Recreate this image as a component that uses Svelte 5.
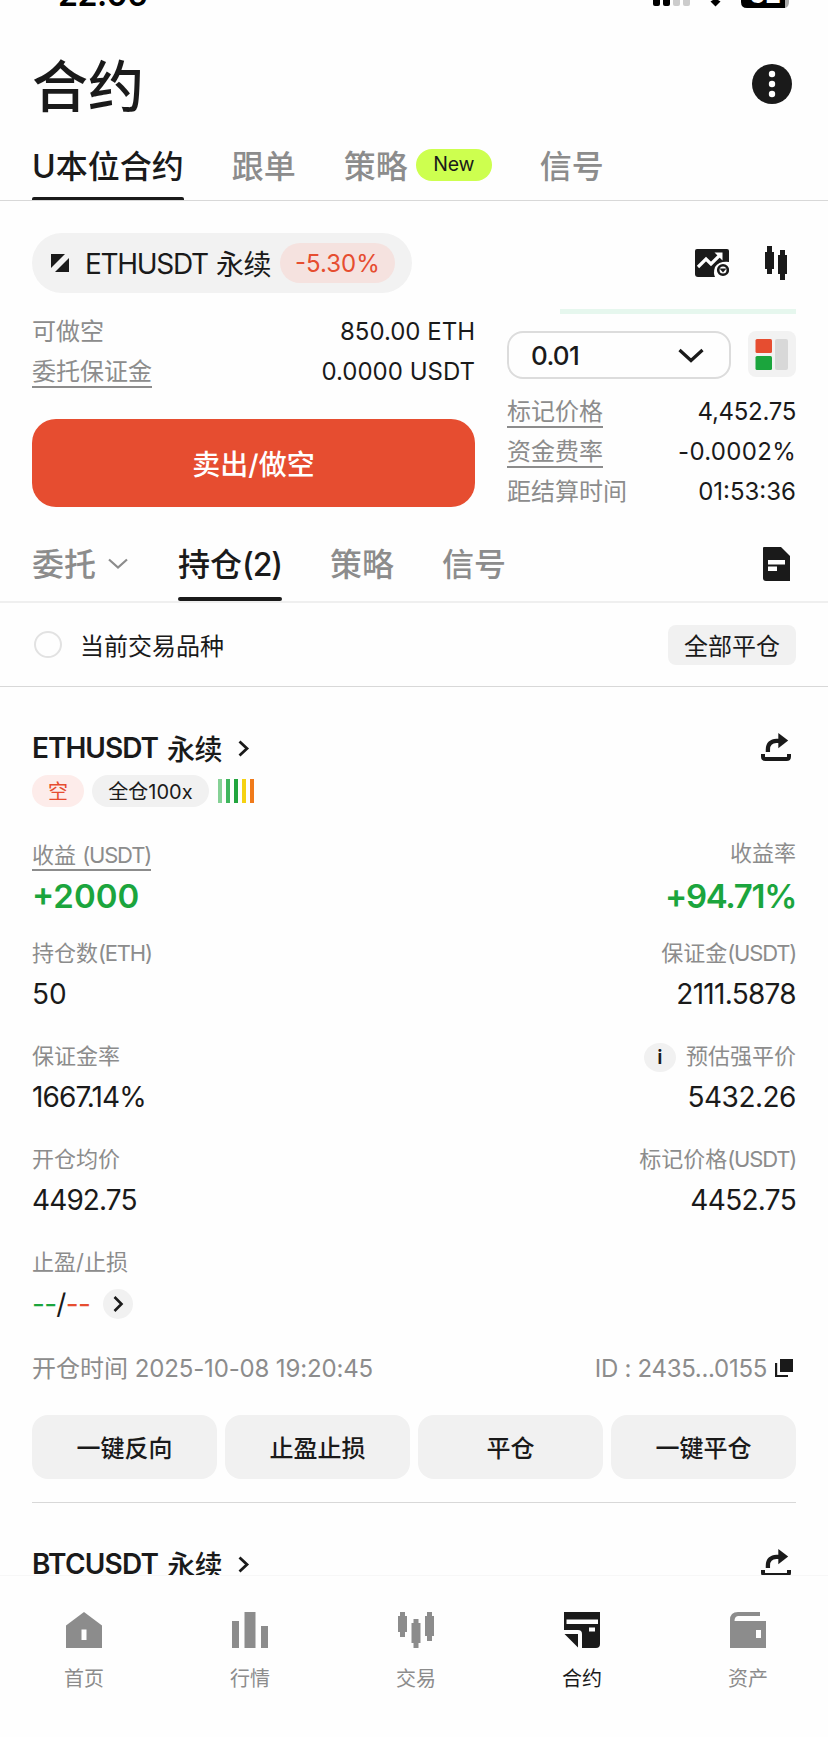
<script>
  // label text, latin unit, value, tracking class: left column then right column
  const fields = [
    { l: ['持仓数', '(ETH)', '50', ''], r: ['保证金', '(USDT)', '2111.5878', 't7'] },
    { l: ['保证金率', '', '1667.14%', 't8'], r: ['预估强平价', '', '5432.26', 't5'], info: true },
    { l: ['开仓均价', '', '4492.75', 't8'], r: ['标记价格', '(USDT)', '4452.75', 't7'] }
  ];
  const bars = ['#86d196', '#3fb65d', '#22a53e', '#f5d211', '#f07a1a'];
  const actions = ['一键反向', '止盈止损', '平仓', '一键平仓'];
  const nav = ['首页', '行情', '交易', '合约', '资产'];
</script>

{#snippet share()}
  <svg class="share" width="30" height="28" viewBox="0 0 30 28" fill="none" stroke="#1a1a1a">
    <path d="M6.900 19v-2.500c0-5.500 3.500-8.700 8.500-8.700h3" stroke-width="4.300" />
    <path d="M17.300 0L27.200 7.600l-9.900 7.600z" fill="#1a1a1a" stroke="none" />
    <path d="M2 21v2.500q0 2.500 2.500 2.500h21q2.500 0 2.500-2.500V21" stroke-width="4" />
  </svg>
{/snippet}

{#snippet symbol(name)}
  <div class="row symbol">
    <b class:btc={name === 'BTCUSDT'}>{name}</b><b class="cn">永续</b>
    <svg width="12" height="17" viewBox="0 0 12 17" fill="none" stroke="#1a1a1a" stroke-width="2.800"><path d="M1.500 1.500L9 8.500l-7.500 7" /></svg>
    <span class="grow"></span>
    {@render share()}
  </div>
{/snippet}

<div class="app">
  <main>
    <div class="status">
      <span class="clock">22:06</span>
      <svg width="140" height="10" viewBox="0 0 140 10">
        <rect x="0" y="-8" width="7" height="14" rx="2" /><rect x="10" y="-10" width="7" height="16" rx="2" />
        <rect x="20" y="-12" width="7" height="18" rx="2" fill="#ccc" /><rect x="30" y="-14" width="7" height="20" rx="2" fill="#ccc" />
        <path d="M62.500 6.500L57.500 1.500q5-4 10 0z" />
        <path d="M88-10h44v18H94q-6 0-6-6z" /><path d="M132-10h4V2q0 5-4 6z" fill="#aaa" />
        <text x="96" y="3" fill="#fff" font-size="25" font-weight="700">62</text>
      </svg>
    </div>
    <header class="row">
      <h1>合约</h1>
      <svg width="40" height="40" viewBox="0 0 40 40"><circle cx="20" cy="20" r="20" fill="#1a1a1a" /><g fill="#fff"><circle cx="20" cy="10" r="3.200" /><circle cx="20" cy="20" r="3.200" /><circle cx="20" cy="30" r="3.200" /></g></svg>
    </header>
    <nav class="row tabs">
      <div class="on">U本位合约</div>
      <div>跟单</div>
      <div class="row">策略<span class="new">New</span></div>
      <div>信号</div>
    </nav>

    <section class="trade">
      <div class="row head">
        <div class="row pill">
          <svg width="18" height="18" viewBox="0 0 18 18" fill="#1a1a1a"><path d="M0 0h14L0 14z" /><path d="M18 4v14H4z" /></svg>
          <span class="pair">ETHUSDT</span><span class="cn">永续</span>
          <span class="chg">-5.30%</span>
        </div>
        <span class="grow"></span>
        <svg class="chart" width="34" height="28" viewBox="0 0 34 28">
          <path d="M2 0h30q2 0 2 2v24q0 2-2 2H3q-3 0-3-3V2q0-2 2-2z" fill="#1a1a1a" />
          <path d="M3 18L11 10l5 5L25 6" fill="none" stroke="#fff" stroke-width="3.200" /><path d="M19.500 3.500h8v8z" fill="#fff" />
          <path d="M34 13v15H20q-2-4 0-10 4-6 14-5z" fill="#fff" />
          <circle cx="28" cy="21" r="4.800" fill="#fff" stroke="#1a1a1a" stroke-width="2.600" /><path d="M24.500 19.500h7L28 23.500z" fill="#1a1a1a" />
        </svg>
        <svg class="candles" width="24" height="34" viewBox="0 0 24 34" fill="#1a1a1a"><path d="M3 0h5v6h2v17h-2v5H3v-5H1V6h2zM16 4h5v5h2v19h-2v6h-5v-6h-2V9h2z" /></svg>
      </div>
      <div class="row cols">
        <div class="left">
          <div class="row kv"><span>可做空</span><em>850.00 ETH</em></div>
          <div class="row kv"><span class="u">委托保证金</span><em>0.0000 USDT</em></div>
          <button class="sell">卖出/做空</button>
        </div>
        <div class="right">
          <div class="depth"></div>
          <div class="row sel">
            <div class="row box"><span class="t7">0.01</span><svg width="26" height="15" viewBox="0 0 26 15" fill="none" stroke="#1a1a1a" stroke-width="3.200"><path d="M1.500 2L13 12.500 24.500 2" /></svg></div>
            <svg width="48" height="46" viewBox="0 0 48 46"><rect width="48" height="46" rx="8" fill="#f2f2f2" /><rect x="7.500" y="8" width="16.500" height="14" rx="1.500" fill="#e64d30" /><rect x="7.500" y="25" width="16.500" height="14" rx="1.500" fill="#1ba53d" /><rect x="27" y="8" width="13" height="31" rx="2" fill="#d8d8d8" /></svg>
          </div>
          <div class="row kv"><span class="u">标记价格</span><em class="t3">4,452.75</em></div>
          <div class="row kv"><span class="u">资金费率</span><em class="wide">-0.0002%</em></div>
          <div class="row kv"><span>距结算时间</span><em>01:53:36</em></div>
        </div>
      </div>
    </section>

    <nav class="row tabs second">
      <div class="row">委托<svg class="chev" width="20" height="12" viewBox="0 0 20 12" fill="none" stroke="#8c8c8c" stroke-width="2.200"><path d="M1 1.500l9 8 9-8" /></svg></div>
      <div class="on">持仓<span class="cnt">(2)</span></div>
      <div>策略</div>
      <div>信号</div>
      <span class="grow"></span>
      <svg class="doc" width="27" height="34" viewBox="0 0 27 34"><path d="M1 0h17l9 9v25H3q-3 0-3-3V1q0-1 1-1z" fill="#1a1a1a" /><path d="M5 13h17v4.500H5zM5 19.500h9V24H5z" fill="#fff" /></svg>
    </nav>
    <div class="row filter">
      <i class="radio"></i><span>当前交易品种</span>
      <span class="grow"></span>
      <button>全部平仓</button>
    </div>

    <section class="position">
      {@render symbol('ETHUSDT')}
      <div class="row badges">
        <span class="short">空</span><span class="lev">全仓100x</span>
        <div class="row bars">{#each bars as c}<i style="background:{c}"></i>{/each}</div>
      </div>
      <div class="row pnl">
        <div><div class="lbl"><span class="u">收益 <span class="unit">(USDT)</span></span></div><strong>+2000</strong></div>
        <div class="r"><div class="lbl plain">收益率</div><strong class="rate">+94.71%</strong></div>
      </div>
      {#each fields as f}
        <div class="row field">
          <div><div class="lbl">{f.l[0]}<span class="unit">{f.l[1]}</span></div><div class="val {f.l[3]}">{f.l[2]}</div></div>
          <div class="r"><div class="lbl">{#if f.info}<i class="info">i</i>{/if}{f.r[0]}<span class="unit">{f.r[1]}</span></div><div class="val {f.r[3]}">{f.r[2]}</div></div>
        </div>
      {/each}
      <div class="row field last">
        <div>
          <div class="lbl">止盈/止损</div>
          <div class="row val tpsl"><span class="t7"><span class="g">--</span>/<span class="d">--</span></span>
            <i class="go"><svg width="11" height="16" viewBox="0 0 11 16" fill="none" stroke="#1a1a1a" stroke-width="2.600"><path d="M1.500 1L8.500 8l-7 7" /></svg></i></div>
        </div>
      </div>
      <div class="row time">
        <span class="opened">开仓时间 <span class="date">2025-10-08 19:20:45</span></span>
        <div class="row"><span class="t3">ID : 2435...0155</span><svg width="18" height="18" viewBox="0 0 18 18" fill="#1a1a1a"><path d="M5 0h13v13H5zM0 4h2.200v12H13v2H0z" /></svg></div>
      </div>
      <div class="actions">{#each actions as a}<button>{a}</button>{/each}</div>
      <hr />
      {@render symbol('BTCUSDT')}
    </section>
  </main>

  <footer>
    {#each nav as item, i}
      <div class:active={i === 3}>
        <svg width="36" height="36" viewBox="0 0 36 36" fill="currentColor">
          {#if i === 0}<path fill-rule="evenodd" d="M18 0l18 13.500V36H0V13.500zM15.500 17.500v10.500h5V17.500z" />
          {:else if i === 1}<path d="M0 9h7v27H0zM12.500 0h11v36h-11zM29 14h7v22h-7z" />
          {:else if i === 2}<path d="M2 0h5v4h2v16H7v5H2v-5H0V4h2zM15.500 7h5v4h2v20h-2v5h-5v-5h-2V11h2zM29 0h5v4h2v20h-2v5h-5v-5h-2V4h2z" />
          {:else if i === 3}<path fill-rule="evenodd" d="M0 0h36v32q0 4-4 4H18V22q0-4-4-4H0zM2.500 7.500V12h31.500V7.500zM25 15.500v4h6v-4z" /><path d="M0.500 22H14v13.500z" />
          {:else}<path fill-rule="evenodd" d="M8 0h22v4H8Q4.500 4.500 4.500 9H36v27H0V8Q0 0 8 0zM26 18v8h5v-8z" />{/if}
        </svg>
        <span>{item}</span>
      </div>
    {/each}
  </footer>
</div>

<style>
  :global(body) { background: #fefefe; }
  .app { width: 828px; height: 1737px; display: flex; flex-direction: column; overflow: hidden; color: #1a1a1a; background: #fefefe; font-family: Inter, "Noto Sans CJK SC", sans-serif; }
  .app * { box-sizing: border-box; }
  svg { flex: none; display: block; }
  i, em { font-style: normal; }
  button { font: inherit; color: inherit; border: 0; padding: 0; background: #f1f1f1; }
  main { flex: 1; min-height: 0; overflow: hidden; display: flex; flex-direction: column; }
  main > * { flex: none; }
  .row { display: flex; align-items: center; white-space: nowrap; }
  .grow { flex: 1; }
  .cn { letter-spacing: -0.5px; }
  .t3 { letter-spacing: -0.3px; }
  .t5 { letter-spacing: -0.5px; }
  .t7 { letter-spacing: -0.7px; }
  .t8 { letter-spacing: -0.9px; }
  .wide { letter-spacing: 0.3px; }

  .status { height: 10px; padding: 0 35px 0 58px; display: flex; justify-content: space-between; overflow: hidden; color: #000; }
  .clock { font-size: 32px; font-weight: 600; letter-spacing: -0.5px; line-height: 40px; height: 40px; margin-top: -25px; }
  header { height: 122px; padding: 26px 36px 0 32px; justify-content: space-between; }
  h1 { margin: 5px 0 0; font-size: 56px; font-weight: 500; line-height: 60px; }

  .tabs { height: 69px; padding: 0 32px; gap: 48px; border-bottom: 1px solid #d8d8d8; font-size: 32px; font-weight: 500; color: #8c8c8c; }
  .tabs > div { height: 68px; line-height: 69px; }
  .tabs .on { position: relative; color: #1a1a1a; }
  .on::after { content: ''; position: absolute; left: 0; right: 0; bottom: 0; height: 3px; border-radius: 2px 2px 0 0; background: #1a1a1a; }
  .new { width: 76px; height: 32px; margin: -2px 0 0 8px; border-radius: 16px; background: #cdff4f; color: #1a1a1a; font-size: 19.500px; font-weight: 400; line-height: 31px; letter-spacing: -0.3px; text-align: center; }
  .second { height: 76px; margin-top: 15px; border-bottom: 2px solid #efefef; }
  .second > div { height: 74px; line-height: 75px; }
  .second .on::after { height: 4px; border-radius: 2px; }
  .cnt { letter-spacing: -1.1px; }
  .chev { margin: 0 2px 0 12px; }
  .doc { margin-right: 6px; }

  .trade { padding: 32px 32px 0; }
  .head { height: 60px; }
  .pill { width: 380px; height: 60px; padding-left: 19px; border-radius: 30px; background: #f2f2f2; font-size: 28px; }
  .pair { margin: 2px 8px 0 16px; letter-spacing: -1.3px; }
  .chg { width: 115px; height: 40px; margin-left: 9px; border-radius: 20px; background: #f5e2df; color: #e64d30; font-size: 24px; line-height: 41px; text-align: center; }
  .chart { margin-right: 35px; }
  .candles { margin-right: 8px; }
  .cols { align-items: flex-start; justify-content: space-between; }
  .left { width: 443px; padding-top: 19px; }
  .right { width: 289px; padding-top: 16px; }
  .kv { height: 40px; justify-content: space-between; font-size: 24px; color: #8c8c8c; }
  .kv > span { height: 32px; line-height: 32px; }
  .kv em { color: #1a1a1a; line-height: 30px; }
  .u { border-bottom: 2px solid #8c8c8c; }
  .sell { width: 443px; height: 88px; margin-top: 27px; border-radius: 24px; background: #e64d30; color: #fff; font-size: 28px; font-weight: 500; }
  .depth { width: 236px; height: 5px; margin-left: auto; background: #e6f7ee; }
  .sel { margin: 17px 0 13px; justify-content: space-between; align-items: flex-start; }
  .box { width: 224px; height: 48px; padding: 0 25px 0 22px; border: 2px solid #dcdcdc; border-radius: 16px; justify-content: space-between; font-size: 26px; font-weight: 500; }

  .filter { height: 84px; padding: 0 32px 0 34px; border-bottom: 1px solid #d8d8d8; font-size: 24px; }
  .radio { width: 28px; height: 27px; margin-right: 18px; border: 2px solid #e2e2e2; border-radius: 50%; }
  .filter button { width: 128px; height: 40px; border-radius: 8px; }

  .position { padding: 0 32px; }
  .symbol { height: 32px; margin-top: 45px; font-size: 28px; }
  .symbol b { font-weight: 600; letter-spacing: -1px; }
  .symbol .btc { letter-spacing: -0.8px; }
  .symbol .cn { margin: 0 16px 0 9px; font-weight: 500; letter-spacing: -0.5px; }
  .share { margin: 0 5px 2px 0; }
  .badges { height: 32px; margin-top: 11px; gap: 8px; font-size: 20px; text-align: center; }
  .short, .lev { height: 32px; line-height: 34px; border-radius: 16px; }
  .short { width: 52px; background: #fdecea; color: #e64d30; }
  .lev { width: 117px; background: #f1f1f1; }
  .bars { gap: 4px; margin-left: 1px; }
  .bars i { width: 4px; height: 24px; }
  .pnl { margin-top: 32px; justify-content: space-between; align-items: flex-start; }
  .r { text-align: right; }
  .lbl { height: 30px; line-height: 30px; font-size: 22px; color: #8c8c8c; }
  .unit { letter-spacing: -1.2px; }
  .pnl .lbl { height: 32px; line-height: 32px; }
  .pnl .u { display: inline-block; height: 32px; }
  .pnl .plain { line-height: 28px; }
  strong { display: block; height: 44px; margin-top: 3px; line-height: 44px; font-size: 33px; font-weight: 600; color: #1ba53d; }
  .rate { letter-spacing: -1.3px; }
  .field { height: 70px; margin-bottom: 33px; justify-content: space-between; }
  .pnl + .field { margin-top: 20px; }
  .val { height: 30px; margin-top: 10px; line-height: 32px; font-size: 28px; }
  .last { height: 72px; margin-bottom: 0; }
  .tpsl { margin-top: 12px; }
  .info { display: inline-block; width: 32px; height: 29px; margin-right: 10px; border-radius: 50%; background: #f1f1f1; color: #1a1a1a; font-size: 20px; font-weight: 600; line-height: 29px; text-align: center; }
  .g { color: #1ba53d; } .d { color: #e64d30; }
  .go { width: 30px; height: 30px; margin-left: 13px; border-radius: 50%; background: #f1f1f1; display: grid; place-items: center; }
  .time { height: 30px; margin-top: 34px; justify-content: space-between; font-size: 24px; color: #8c8c8c; }
  .opened { height: 30px; line-height: 31px; }
  .date { letter-spacing: -0.15px; }
  .time svg { margin: 0 3px 0 8px; }
  .actions { display: grid; grid-template-columns: repeat(4, 1fr); gap: 8px; margin-top: 32px; }
  .actions button { height: 64px; padding-bottom: 2px; border-radius: 16px; font-size: 24px; font-weight: 500; }
  hr { height: 1px; margin: 23px 0 0; border: 0; background: #d8d8d8; }

  footer { flex: none; height: 162px; padding-left: 1px; display: grid; grid-template-columns: repeat(5, 166px); border-top: 1px solid #f7f7f7; background: #fefefe; color: #8c8c8c; font-size: 20px; overflow: hidden; }
  footer div { display: flex; flex-direction: column; align-items: center; padding-top: 36px; gap: 16px; line-height: 30px; }
  .active { color: #1a1a1a; }
</style>
